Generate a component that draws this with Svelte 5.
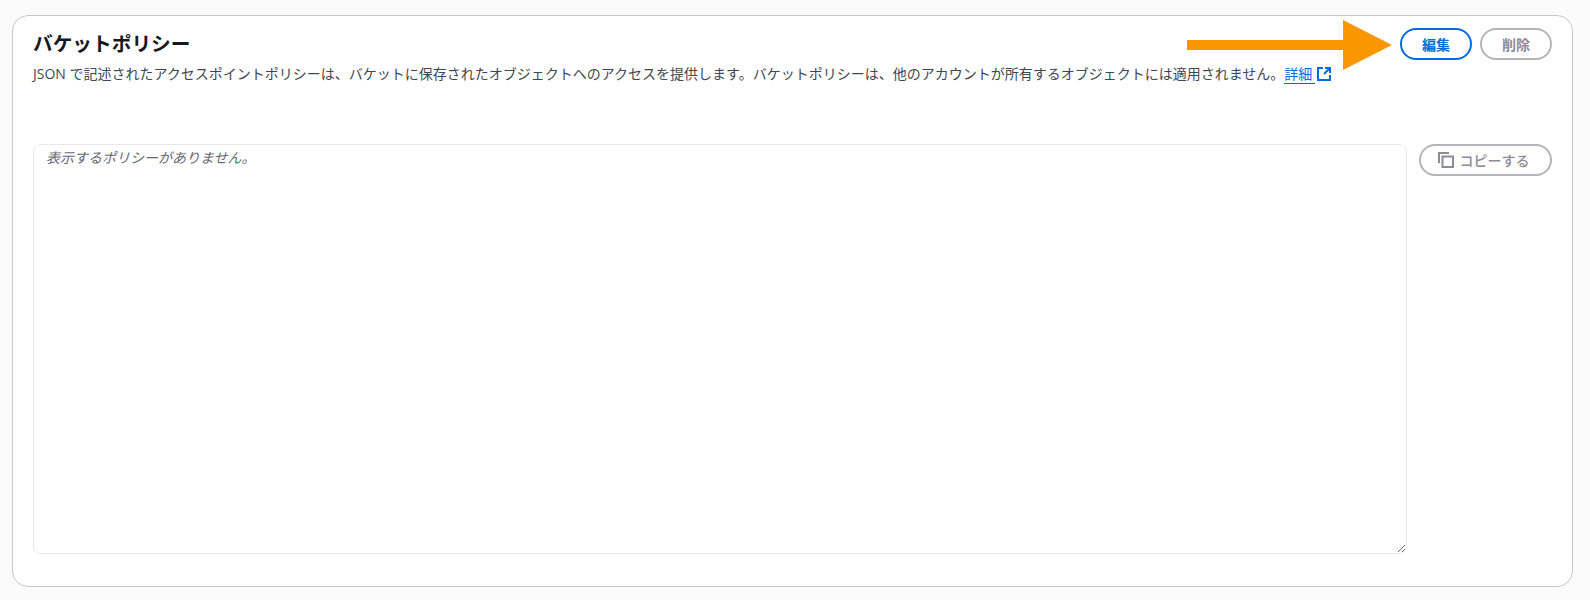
<script lang="ts">
  const description =
    "JSON で記述されたアクセスポイントポリシーは、バケットに保存されたオブジェクトへのアクセスを提供します。バケットポリシーは、他のアカウントが所有するオブジェクトには適用されません。";
</script>

<div class="page">
  <section class="card">
    <header class="card-header">
      <div class="heading">
        <h2>バケットポリシー</h2>
        <p>
          {description}<a href="#details" class="link">詳細</a><svg class="external" viewBox="0 0 16 16" width="16" height="16" aria-hidden="true">
            <path d="M7 2H2v12h12V9" />
            <path d="M9 2h5v5M14 2L8 8" />
          </svg>
        </p>
      </div>
      <div class="actions">
        <button class="btn btn-primary">編集</button>
        <button class="btn" disabled>削除</button>
      </div>
    </header>

    <div class="policy">
      <textarea placeholder="表示するポリシーがありません。" readonly></textarea>
      <button class="btn btn-copy" disabled>
        <svg viewBox="0 0 16 16" width="16" height="16" aria-hidden="true">
          <path d="M1 11V1h10" />
          <path d="M4.5 4.5h10.5v10.500H4.500z" />
        </svg>
        コピーする
      </button>
    </div>

    <svg class="arrow" viewBox="0 0 205 50" width="205" height="50" aria-hidden="true">
      <path d="M0 20h156V0l49 25-49 25V30H0z" />
    </svg>
  </section>
</div>

<style>
  :global(body) {
    background: #fbfbfb;
    font-family: "Open Sans", "Noto Sans CJK JP", sans-serif;
    color: #16191f;
  }

  .page {
    padding: 15px 17px 14px 12px;
  }

  .card {
    position: relative;
    height: 572px;
    box-sizing: border-box;
    padding: 12px 20px 0 20px;
    background: #fff;
    border: 1px solid #c6c6cd;
    border-radius: 16px;
  }

  .card-header {
    display: flex;
    justify-content: space-between;
    height: 116px;
  }

  h2 {
    margin: 2px 0 0;
    font-size: 19.7px;
    line-height: 28px;
    font-weight: 700;
    color: #16191f;
  }

  p {
    margin: 6px 0 0;
    font-size: 14px;
    line-height: 20px;
    color: #414750;
    white-space: nowrap;
  }

  .link {
    padding-right: 3px;
    color: #006ce0;
    text-decoration: none;
    border-bottom: 1px solid #006ce0;
  }

  .external {
    vertical-align: -3px;
    margin-left: 1px;
  }

  .external path {
    fill: none;
    stroke: #006ce0;
    stroke-width: 2;
  }

  .actions {
    display: flex;
    gap: 8px;
  }

  .btn {
    display: inline-flex;
    align-items: center;
    justify-content: center;
    gap: 6px;
    height: 32px;
    width: 72px;
    box-sizing: border-box;
    padding: 0;
    font-family: inherit;
    font-size: 14px;
    font-weight: 700;
    background: #fff;
    border: 2px solid #b4b4bb;
    border-radius: 20px;
    color: #8c8c94;
  }

  .btn-primary {
    border-color: #006ce0;
    color: #006ce0;
  }

  .policy {
    display: flex;
    align-items: flex-start;
    gap: 12px;
  }

  textarea {
    flex: 1;
    height: 410px;
    box-sizing: border-box;
    padding: 3px 12px;
    font-family: inherit;
    font-size: 14px;
    line-height: 20px;
    background: #fff;
    border: 1px solid #e8e8ec;
    border-radius: 8px;
    outline: none;
  }

  textarea::placeholder {
    color: #656871;
    font-style: italic;
    opacity: 1;
  }

  .btn-copy {
    width: 133px;
    flex: none;
    padding-right: 4px;
    font-weight: 500;
  }

  .btn-copy path {
    fill: none;
    stroke: #8c8c94;
    stroke-width: 2;
  }

  .arrow {
    position: absolute;
    top: 4px;
    right: 180px;
  }

  .arrow path {
    fill: #fa9600;
  }
</style>
